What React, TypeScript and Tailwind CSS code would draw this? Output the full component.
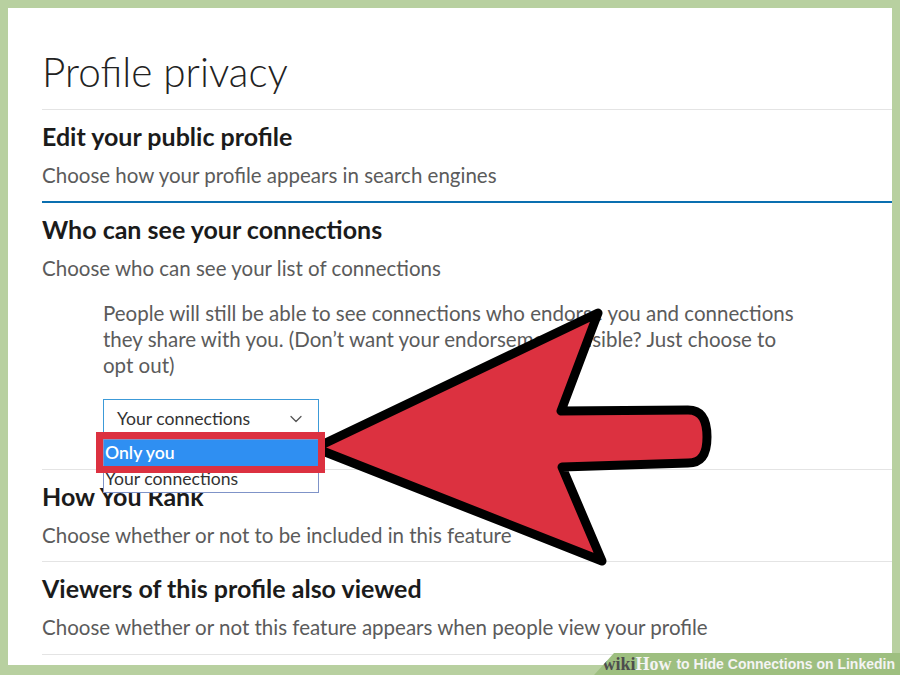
import { ChevronDown } from 'lucide-react';

const sans = { fontFamily: 'Lato, "Noto Sans", sans-serif' };

function Section({ title, text }: { title: string; text: string }) {
  return (
    <div className="pt-[12px]">
      <h2 className="text-[25px] leading-[28px] font-bold text-[#1b1b1b]">{title}</h2>
      <p className="mt-[12px] text-[20.5px] leading-[26px] text-[#5b5b5b]">{text}</p>
    </div>
  );
}

function Arrow() {
  return (
    <svg
      className="absolute inset-0 pointer-events-none"
      width={900}
      height={675}
      viewBox="0 0 900 675"
    >
      <path
        d="M315 448 L598 313 L561 411 L688 410 C703 410 707 422 707 437 C707 452 703 463 688 463 L562 467 L602 561 Z"
        fill="#dc3140"
        stroke="#000"
        strokeWidth={9}
        strokeLinejoin="round"
      />
    </svg>
  );
}

export default function App() {
  return (
    <div className="relative w-[900px] h-[675px] bg-[#b8d0a0] pt-[8px] pl-[8px] pr-[8px] overflow-hidden" style={sans}>
      <div className="h-[657px] bg-white pl-[34px]">
        <h1 className="pt-[40px] text-[40.5px] leading-[48px] font-light text-[#222]">Profile privacy</h1>
        <div className="mt-[13px] h-px bg-[#e4e4e4]" />

        <Section title="Edit your public profile" text="Choose how your profile appears in search engines" />
        <div className="mt-[13px] h-[2px] bg-[#0a6fb0]" />

        <div className="relative">
          <Section title="Who can see your connections" text="Choose who can see your list of connections" />
          <div className="pl-[61px]">
            <p className="mt-[19px] text-[20.5px] leading-[26px] text-[#5b5b5b]">
              People will still be able to see connections who endorse you and connections
              <br />
              they share with you. (Don’t want your endorsements visible? Just choose to
              <br />
              opt out)
            </p>
            <div className="relative mt-[21px] w-[216px] h-[40px] border border-[#3c9ad8] flex items-center justify-between pl-[13px] pr-[12px] text-[17.6px] text-[#333]">
              <span>Your connections</span>
              <ChevronDown size={20} strokeWidth={1.5} className="text-[#555]" />
              <div className="absolute left-[-1px] top-[39px] w-[216px] border border-[#7f93c8] bg-white z-10 text-[17.6px] leading-[26px]">
                <div className="bg-[#2f8ff2] text-white font-semibold pl-[1px]">Only you</div>
                <div className="text-[#333] pl-[1px]">Your connections</div>
              </div>
              <div className="absolute left-[-8px] top-[32px] w-[229px] h-[41px] border-[7px] border-[#dc3140] z-20" />
            </div>
          </div>
          <div className="mt-[30px] h-px bg-[#e4e4e4]" />
        </div>

        <Section title="How You Rank" text="Choose whether or not to be included in this feature" />
        <div className="mt-[13px] h-px bg-[#e4e4e4]" />

        <Section title="Viewers of this profile also viewed" text="Choose whether or not this feature appears when people view your profile" />
        <div className="mt-[14px] h-px bg-[#e4e4e4]" />
      </div>

      <Arrow />

      <div className="absolute right-0 bottom-0 h-[22px] w-[306px] bg-[#9ebf80] [clip-path:polygon(20px_0,100%_0,100%_100%,0_100%)] flex items-center justify-end pr-[5px]">
        <span className="text-[18px] font-bold text-[#4d4d4d]" style={{ fontFamily: '"Liberation Serif", serif' }}>wiki</span>
        <span className="text-[18px] font-bold text-[#f4f4f4]" style={{ fontFamily: '"Liberation Serif", serif' }}>How</span>
        <span className="ml-[5px] text-[14px] font-bold text-[#f4f4f4]" style={{ fontFamily: '"Liberation Sans", sans-serif' }}>to Hide Connections on Linkedin</span>
      </div>
    </div>
  );
}
